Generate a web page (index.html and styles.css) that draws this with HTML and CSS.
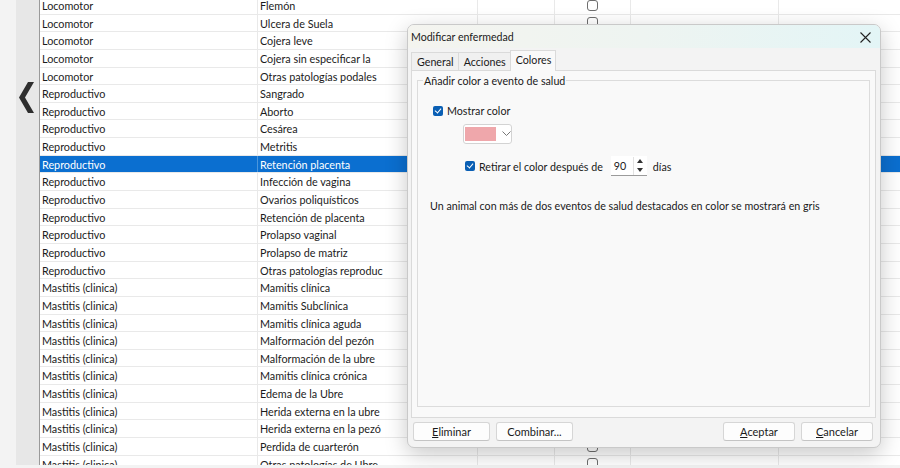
FILE: index.html
```html
<!DOCTYPE html>
<html lang="es">
<head>
  <meta charset="UTF-8" />
  <title>Enfermedades</title>
  <link rel="stylesheet" href="styles.css">
</head>
<body>
  <div class="app">
    <div class="side"></div>
    <div class="nav-strip">
      <svg class="chevron" width="15" height="31" viewBox="0 0 15 31">
        <polygon points="9,0 15,0 6,15.5 15,31 9,31 0,15.5" fill="#2e2e2e"/>
      </svg>
    </div>

    <div class="grid-wrap">
      <div class="grid" id="grid"></div>
    </div>
  </div>

  <!-- Diálogo modal encima de la tabla -->
  <div class="dialog">
    <div class="dialog-title">
      <span>Modificar enfermedad</span>
      <svg class="close" width="11" height="11" viewBox="0 0 11 11">
        <path d="M0.5 0.5 L10.5 10.5 M10.5 0.5 L0.5 10.5" stroke="#222" stroke-width="1.1" fill="none"/>
      </svg>
    </div>

    <div class="tabs">
      <div class="tab">General</div>
      <div class="tab">Acciones</div>
      <div class="tab active">Colores</div>
    </div>

    <div class="tab-panel">
      <fieldset class="group">
        <legend>Añadir color a evento de salud</legend>

        <label class="check-row">
          <span class="check on"></span>
          Mostrar color
        </label>

        <div class="color-combo">
          <span class="swatch"></span>
          <svg width="9" height="6" viewBox="0 0 9 6"><path d="M0.5 0.5 L4.5 4.5 L8.5 0.5" stroke="#777" fill="none"/></svg>
        </div>

        <div class="retire-row">
          <label class="check-row">
            <span class="check on"></span>
            Retirar el color después de
          </label>
          <div class="spin">
            <span class="spin-value">90</span>
            <span class="spin-btns">
              <span class="up"></span>
              <span class="down"></span>
            </span>
          </div>
          <span>días</span>
        </div>

        <p class="note">Un animal con más de dos eventos de salud destacados en color se mostrará en gris</p>
      </fieldset>
    </div>

    <div class="dialog-buttons">
      <button><u>E</u>liminar</button>
      <button>Combinar...</button>
      <span class="spacer"></span>
      <button><u>A</u>ceptar</button>
      <button><u>C</u>ancelar</button>
    </div>
  </div>

  <script>
    const rows = [
      ['Locomotor', 'Flemón'],
      ['Locomotor', 'Ulcera de Suela'],
      ['Locomotor', 'Cojera leve'],
      ['Locomotor', 'Cojera sin especificar la'],
      ['Locomotor', 'Otras patologías podales'],
      ['Reproductivo', 'Sangrado'],
      ['Reproductivo', 'Aborto'],
      ['Reproductivo', 'Cesárea'],
      ['Reproductivo', 'Metritis'],
      ['Reproductivo', 'Retención placenta'],
      ['Reproductivo', 'Infección de vagina'],
      ['Reproductivo', 'Ovarios poliquísticos'],
      ['Reproductivo', 'Retención de placenta'],
      ['Reproductivo', 'Prolapso vaginal'],
      ['Reproductivo', 'Prolapso de matriz'],
      ['Reproductivo', 'Otras patologías reproduc'],
      ['Mastitis (clinica)', 'Mamitis clínica'],
      ['Mastitis (clinica)', 'Mamitis Subclínica'],
      ['Mastitis (clinica)', 'Mamitis clínica aguda'],
      ['Mastitis (clinica)', 'Malformación del pezón'],
      ['Mastitis (clinica)', 'Malformación de la ubre'],
      ['Mastitis (clinica)', 'Mamitis clínica crónica'],
      ['Mastitis (clinica)', 'Edema de la Ubre'],
      ['Mastitis (clinica)', 'Herida externa en la ubre'],
      ['Mastitis (clinica)', 'Herida externa en la pezó'],
      ['Mastitis (clinica)', 'Perdida de cuarterón'],
      ['Mastitis (clinica)', 'Otras patologías de Ubre']
    ];
    const grid = document.getElementById('grid');
    rows.forEach((r, i) => {
      const row = document.createElement('div');
      row.className = 'row' + (i === 9 ? ' selected' : '');
      row.innerHTML =
        '<div class="cell">' + r[0] + '</div>' +
        '<div class="cell">' + r[1] + '</div>' +
        '<div class="cell"></div>' +
        '<div class="cell center"><span class="box"></span></div>' +
        '<div class="cell"></div>' +
        '<div class="cell last"></div>';
      grid.appendChild(row);
    });
  </script>
</body>
</html>
```

FILE: styles.css
```css
body {
  margin: 0;
  width: 900px;
  height: 468px;
  overflow: hidden;
  background-color: #f3f3f3;
  font-family: 'Lato', 'Open Sans', sans-serif;
  font-size: 10.7px;
  color: #1b1b1b;
  position: relative;
}

.app {
  display: flex;
  height: 465px;
}

.side {
  width: 16px;
  background-color: #f3f3f3;
}

.nav-strip {
  width: 23px;
  background-color: #e7e7e7;
  display: flex;
  justify-content: center;
  padding-top: 82px;
  padding-right: 2px;
  box-sizing: border-box;
}

.grid-wrap {
  flex: 1;
  overflow: hidden;
  background-color: #fff;
  border-left: 1px solid #9a9a9a;
}

.grid {
  margin-top: -3px;
}

.row {
  display: grid;
  grid-template-columns: 218px 220px 77px 76px 148px 1fr;
  height: 17.65px;
  border-bottom: 1px solid #e9e9e9;
  box-sizing: border-box;
  font-size: 10.8px;
}

.row .cell {
  border-right: 1px solid #e9e9e9;
  padding-left: 2px;
  line-height: 17px;
  white-space: nowrap;
  overflow: hidden;
}

.row .cell.last {
  border-right: none;
}

.row .cell.center {
  display: flex;
  justify-content: center;
  align-items: center;
  padding-left: 0;
}

.box {
  width: 9px;
  height: 9px;
  border: 1px solid #6e6e6e;
  border-radius: 3px;
  background-color: #fff;
}

.row.selected {
  background-color: #0b6fd0;
  color: #fff;
}

.row.selected .cell {
  border-right-color: #4b96dc;
}

/* Diálogo */
.dialog {
  position: absolute;
  left: 407px;
  top: 24px;
  width: 474px;
  height: 424px;
  box-sizing: border-box;
  background-color: #f3f3f3;
  border: 1px solid #c9c9c9;
  border-radius: 7px;
  box-shadow: 0 6px 22px rgba(0, 0, 0, 0.22);
  display: flex;
  flex-direction: column;
  overflow: hidden;
  color: #1a1a1a;
}

.dialog-title {
  height: 23px;
  flex-shrink: 0;
  display: flex;
  align-items: center;
  justify-content: space-between;
  padding: 0 9px 0 3px;
  background: linear-gradient(90deg, #f4f4ef 0%, #eef4f1 50%, #e3f5f6 100%);
  font-size: 10.6px;
}

.close {
  margin-top: 1px;
}

.tabs {
  display: flex;
  align-items: flex-end;
  height: 20px;
  flex-shrink: 0;
  padding-left: 3px;
  margin-top: 2px;
}

.tab {
  height: 17px;
  line-height: 17px;
  padding: 0 4px 0 5px;
  border: 1px solid #dadada;
  border-bottom: none;
  background-color: #f0f0f0;
  margin-right: -1px;
}

.tab.active {
  height: 20px;
  line-height: 17px;
  background-color: #f9f9f9;
  position: relative;
  top: 1px;
  z-index: 1;
}

.tab-panel {
  margin: 0 4px 0 3px;
  height: 348px;
  flex-shrink: 0;
  background-color: #f9f9f9;
  border: 1px solid #dadada;
  box-sizing: border-box;
  padding: 3px 5px 10px 5px;
  display: flex;
  flex-direction: column;
}

.group {
  flex: 1;
  margin: 0;
  min-width: 0;
  box-sizing: border-box;
  border: 1px solid #dcdcdc;
  padding: 17px 8px 0 15px;
}

.group legend {
  padding: 0 1px;
  margin-left: -10px;
}

.check-row {
  display: flex;
  align-items: center;
  gap: 4px;
}

.check {
  width: 10px;
  height: 10px;
  border-radius: 2px;
  background-color: #0a5fb4;
  position: relative;
}

.check.on::after {
  content: '';
  position: absolute;
  left: 3px;
  top: 1px;
  width: 3px;
  height: 5px;
  border: solid #fff;
  border-width: 0 1.3px 1.3px 0;
  transform: rotate(40deg);
}

.color-combo {
  margin: 7px 0 0 30px;
  width: 46px;
  height: 18px;
  border: 1px solid #d3d3d3;
  border-radius: 3px;
  background-color: #fff;
  display: flex;
  align-items: center;
  gap: 6px;
  padding-left: 1px;
}

.swatch {
  width: 31px;
  height: 14px;
  background-color: #efa7ab;
}

.retire-row {
  display: flex;
  align-items: center;
  margin: 12px 0 0 32px;
}

.spin {
  display: flex;
  align-items: center;
  width: 36px;
  height: 20px;
  margin: 0 6px 0 8px;
  border-bottom: 1px solid #9b9b9b;
  box-sizing: border-box;
  background-color: #fff;
}

.spin-value {
  flex: 1;
  padding-left: 3px;
}

.spin-btns {
  width: 13px;
  height: 18px;
  display: flex;
  flex-direction: column;
  border-left: 1px solid #e2e2e2;
}

.spin-btns span {
  flex: 1;
  display: flex;
  align-items: center;
  justify-content: center;
}

.spin-btns .up::before {
  content: '';
  border: 3px solid transparent;
  border-bottom: 4px solid #333;
  border-top: none;
}

.spin-btns .down::before {
  content: '';
  border: 3px solid transparent;
  border-top: 4px solid #333;
  border-bottom: none;
}

.note {
  margin: 23px 0 0 -3px;
}

.dialog-buttons {
  display: flex;
  align-items: center;
  gap: 6px;
  padding: 4px 7px 0 5px;
}

.dialog-buttons .spacer {
  flex: 1;
}

.dialog-buttons button {
  width: 77px;
  height: 19px;
  font-family: inherit;
  font-size: 11px;
  color: #1a1a1a;
  background-color: #fdfdfd;
  border: 1px solid #d6d6d6;
  border-bottom-color: #c4c4c4;
  border-radius: 3px;
  padding: 0;
}

.dialog-buttons button:nth-of-type(3),
.dialog-buttons button:nth-of-type(4) {
  width: 72px;
}
```
